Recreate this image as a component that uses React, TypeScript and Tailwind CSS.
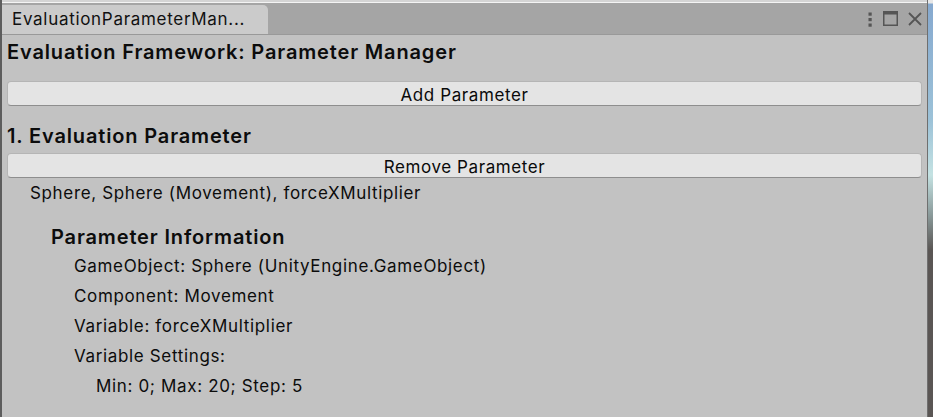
const font = { fontFamily: 'Inter, "Noto Sans", sans-serif' }

const info = [
  { label: 'GameObject: Sphere (UnityEngine.GameObject)', indent: 'pl-[67px]' },
  { label: 'Component: Movement', indent: 'pl-[67px]' },
  { label: 'Variable: forceXMultiplier', indent: 'pl-[67px]' },
  { label: 'Variable Settings:', indent: 'pl-[67px]' },
  { label: 'Min: 0; Max: 20; Step: 5', indent: 'pl-[89px]' },
]

function UnityButton({ label }: { label: string }) {
  return (
    <button className="flex h-[25px] w-full items-center justify-center rounded-[4px] border border-[#b5b5b5] border-b-[#8e8e8e] bg-[#e4e4e4] pt-[3px] text-[17px] leading-[20px] tracking-[0.6px] text-[#0a0a0a]">
      {label}
    </button>
  )
}

function TabIcons() {
  return (
    <div className="flex items-center gap-[10px] pr-[5px] text-[#555]">
      <svg width="6" height="16" viewBox="0 0 6 16">
        <rect x="1.5" y="1.5" width="3.2" height="3.2" fill="#555" />
        <rect x="1.5" y="7" width="3.2" height="3.2" fill="#555" />
        <rect x="1.5" y="12.5" width="3.2" height="3.2" fill="#555" />
      </svg>
      <svg width="15" height="15" viewBox="0 0 15 15">
        <rect x="0.75" y="0.75" width="13.5" height="13.5" fill="none" stroke="#555" strokeWidth="1.5" />
        <rect x="0" y="0" width="15" height="3.5" fill="#555" />
      </svg>
      <svg width="14" height="14" viewBox="0 0 14 14">
        <path d="M1 1 L13 13 M13 1 L1 13" stroke="#555" strokeWidth="1.8" />
      </svg>
    </div>
  )
}

export default function App() {
  return (
    <div className="flex h-[417px] w-[933px] bg-[#c2c2c2]" style={font}>
      <div className="flex flex-1 flex-col border-l-2 border-r border-l-[#5d5d5d] border-r-[#6f6f6f]">
        <div className="h-[3px] bg-[#d4d4d4] border-b border-b-[#f4f4f4]" />
        <div className="flex h-[32px] items-end justify-between border-b border-b-[#999] bg-[#a5a5a5]">
          <div className="flex h-[29px] w-[266px] items-center rounded-tr-[5px] bg-[#cbcbcb] pl-[10px] text-[17px] tracking-[0.7px] text-[#111]">
            EvaluationParameterMan...
          </div>
          <div className="flex h-full items-center">
            <TabIcons />
          </div>
        </div>
        <div className="flex flex-1 flex-col pl-[5px] pr-[5px] text-[#0c0c0c]">
          <div className="h-[30px] pt-[2px] text-[20px] font-semibold leading-[30px] tracking-[0.85px]">
            Evaluation Framework: Parameter Manager
          </div>
          <div className="mt-[16px]">
            <UnityButton label="Add Parameter" />
          </div>
          <div className="mt-[14px] h-[30px] pt-[1px] text-[20px] font-semibold leading-[30px] tracking-[0.85px]">
            1. Evaluation Parameter
          </div>
          <div className="mt-[3px]">
            <UnityButton label="Remove Parameter" />
          </div>
          <div className="mt-[3px] h-[24px] pl-[23px] text-[17px] leading-[24px] tracking-[0.65px]">
            Sphere, Sphere (Movement), forceXMultiplier
          </div>
          <div className="mt-[19px] h-[27px] pl-[44px] text-[20px] font-semibold leading-[27px] tracking-[0.85px]">
            Parameter Information
          </div>
          {info.map((row) => (
            <div key={row.label} className={`h-[30px] text-[17px] leading-[30px] tracking-[0.65px] ${row.indent}`}>
              {row.label}
            </div>
          ))}
        </div>
      </div>
      <div className="w-[5px] bg-[linear-gradient(to_bottom,#e8e8e8_0px,#e8e8e8_3px,#86a9cf_4px,#9cc2d8_120px,#c4e2e2_175px,#8a9a9a_215px,#5a5654_250px,#5a5654_417px)]" />
    </div>
  )
}
